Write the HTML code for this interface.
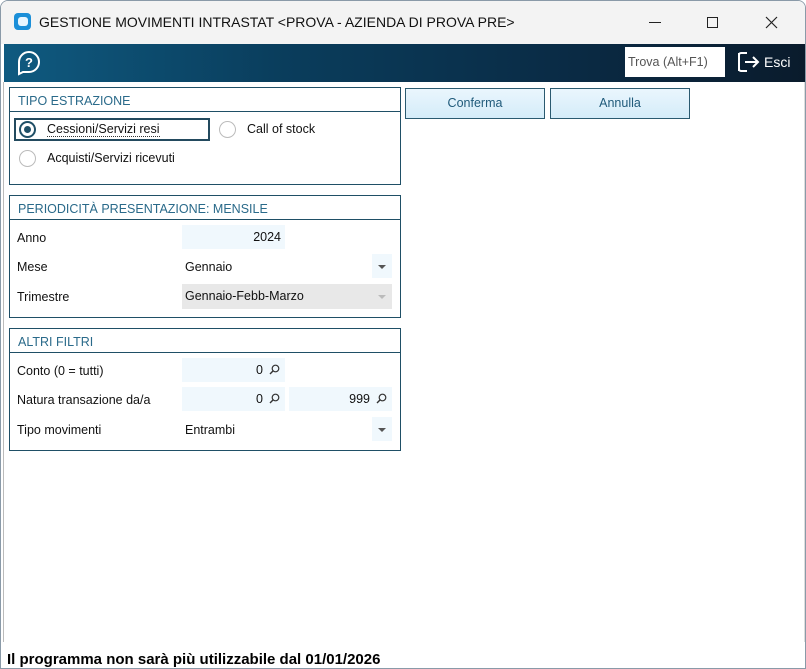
<!DOCTYPE html>
<html><head><meta charset="utf-8"><style>
*{margin:0;padding:0;box-sizing:border-box}
body{width:806px;height:669px;background:#fff;font-family:"Liberation Sans","DejaVu Sans",sans-serif;font-size:12.5px;color:#111;position:relative;overflow:hidden}
.a{position:absolute}
.box{position:absolute;border:1px solid #1f4f66;background:#fff}
.hd{position:absolute;left:0;right:0;top:0;height:24px;border-bottom:1px solid #1f4f66;color:#2a6a8a;padding:6px 0 0 8px;font-size:12.5px}
.fld{position:absolute;background:#f0f8fd;height:24px}
.rad{position:absolute;width:17px;height:17px;border-radius:50%;border:1px solid #bbb;background:#fff}
.btn{position:absolute;border:1px solid #2a5a70;background:linear-gradient(#eaf6fd,#d4ecf9);color:#1f5a7a;text-align:center;line-height:29px}
.arr{position:absolute;width:0;height:0;border-left:4px solid transparent;border-right:4px solid transparent;border-top:4px solid #555}
.mg{position:absolute}
</style></head><body>
<div class="a" style="left:0;top:0;width:806px;height:669px;border:1px solid #8a9aa8;border-radius:8px 8px 0 0"></div>
<div class="a" style="left:1px;top:1px;width:804px;height:43px;background:#f3f3f3;border-radius:7px 7px 0 0"></div>
<div class="a" style="left:14px;top:13px;width:17px;height:17px;background:#1b8fd8;border-radius:4px"></div>
<div class="a" style="left:18px;top:17px;width:10px;height:9px;background:#e8f6ff;border-radius:3px"></div>
<div class="a" style="left:39px;top:14px;font-size:14px;color:#111">GESTIONE MOVIMENTI INTRASTAT &lt;PROVA - AZIENDA DI PROVA PRE&gt;</div>
<div class="a" style="left:649px;top:22px;width:12px;height:1px;background:#222"></div>
<div class="a" style="left:707px;top:17px;width:11px;height:11px;border:1px solid #222"></div>
<svg class="a" style="left:765px;top:16px" width="13" height="13"><path d="M1 1L12 12M12 1L1 12" stroke="#222" stroke-width="1.2"/></svg>
<div class="a" style="left:4px;top:44px;width:801px;height:38px;background:linear-gradient(90deg,#0f5a80 0%,#0a3d5c 35%,#0a2b45 70%,#0a1b2c 100%)"></div>
<svg class="a" style="left:16px;top:50px" width="26" height="26" viewBox="0 0 26 26"><path d="M13 2a10 10 0 1 1 0 20H7l-4 2V12A10 10 0 0 1 13 2z" fill="none" stroke="#fff" stroke-width="2"/><text x="13" y="17" font-size="13" font-weight="bold" fill="#fff" text-anchor="middle" font-family="Liberation Sans">?</text></svg>
<div class="a" style="left:625px;top:47px;width:100px;height:30px;background:#fff;color:#555;padding:8px 0 0 3px;font-size:12.5px">Trova (Alt+F1)</div>
<svg class="a" style="left:737px;top:50px" width="26" height="24" viewBox="0 0 26 24"><path d="M10 3H4a2 2 0 0 0-2 2v14a2 2 0 0 0 2 2h6" fill="none" stroke="#fff" stroke-width="2"/><path d="M2 3v18" stroke="#fff" stroke-width="2"/><path d="M8 12h13M16 7l5 5-5 5" fill="none" stroke="#fff" stroke-width="2"/></svg>
<div class="a" style="left:764px;top:54px;color:#fff;font-size:14px">Esci</div>
<div class="a" style="left:3px;top:82px;width:1px;height:560px;background:#bbb"></div>
<div class="a" style="left:804px;top:82px;width:1px;height:560px;background:#ddd"></div>

<div class="box" style="left:9px;top:87px;width:392px;height:98px"><div class="hd">TIPO ESTRAZIONE</div></div>
<div class="a" style="left:14px;top:118px;width:196px;height:23px;border:2px solid #234a5e"></div>
<div class="rad" style="left:19px;top:121px;border:2px solid #1f4f66"></div><div class="a" style="left:24px;top:126px;width:7px;height:7px;border-radius:50%;background:#1f4f66"></div>
<div class="a" style="left:47px;top:122px;border-bottom:1px dotted #333">Cessioni/Servizi resi</div>
<div class="rad" style="left:219px;top:121px"></div><div class="a" style="left:247px;top:122px">Call of stock</div>
<div class="rad" style="left:19px;top:150px"></div><div class="a" style="left:47px;top:151px">Acquisti/Servizi ricevuti</div>

<div class="btn" style="left:405px;top:88px;width:140px;height:31px">Conferma</div>
<div class="btn" style="left:550px;top:88px;width:140px;height:31px">Annulla</div>

<div class="box" style="left:9px;top:195px;width:392px;height:123px"><div class="hd">PERIODICITÀ PRESENTAZIONE: MENSILE</div></div>
<div class="a" style="left:17px;top:231px">Anno</div>
<div class="fld" style="left:182px;top:225px;width:103px;padding:5px 4px 0 0;text-align:right">2024</div>
<div class="a" style="left:17px;top:260px">Mese</div>
<div class="a" style="left:185px;top:260px">Gennaio</div>
<div class="fld" style="left:372px;top:254px;width:20px"></div><div class="arr" style="left:378px;top:265px"></div>
<div class="a" style="left:17px;top:290px">Trimestre</div>
<div class="a" style="left:182px;top:284px;width:210px;height:25px;background:#e8e8e8;padding:5px 0 0 3px">Gennaio-Febb-Marzo</div>
<div class="arr" style="left:378px;top:295px;border-top-color:#bbb"></div>

<div class="box" style="left:9px;top:328px;width:392px;height:123px"><div class="hd">ALTRI FILTRI</div></div>
<div class="a" style="left:17px;top:364px">Conto (0 = tutti)</div>
<div class="fld" style="left:182px;top:358px;width:103px;padding:5px 22px 0 0;text-align:right">0</div>
<div class="a" style="left:17px;top:393px">Natura transazione da/a</div>
<div class="fld" style="left:182px;top:387px;width:103px;padding:5px 22px 0 0;text-align:right">0</div>
<div class="fld" style="left:289px;top:387px;width:103px;padding:5px 22px 0 0;text-align:right">999</div>
<svg class="mg" style="left:269px;top:364px" width="11" height="11"><circle cx="6.5" cy="4.5" r="3.3" fill="none" stroke="#333" stroke-width="1.2"/><path d="M4.2 6.8L1 10" stroke="#333" stroke-width="1.4"/></svg>
<svg class="mg" style="left:269px;top:393px" width="11" height="11"><circle cx="6.5" cy="4.5" r="3.3" fill="none" stroke="#333" stroke-width="1.2"/><path d="M4.2 6.8L1 10" stroke="#333" stroke-width="1.4"/></svg>
<svg class="mg" style="left:376px;top:393px" width="11" height="11"><circle cx="6.5" cy="4.5" r="3.3" fill="none" stroke="#333" stroke-width="1.2"/><path d="M4.2 6.8L1 10" stroke="#333" stroke-width="1.4"/></svg>
<div class="a" style="left:17px;top:423px">Tipo movimenti</div>
<div class="a" style="left:185px;top:423px">Entrambi</div>
<div class="fld" style="left:372px;top:417px;width:20px"></div><div class="arr" style="left:378px;top:428px"></div>

<div class="a" style="left:7px;top:651px;font-family:'Liberation Sans Narrow','Liberation Sans',sans-serif;font-weight:bold;font-size:15px;color:#000">Il programma non sarà più utilizzabile dal 01/01/2026</div>
</body></html>
